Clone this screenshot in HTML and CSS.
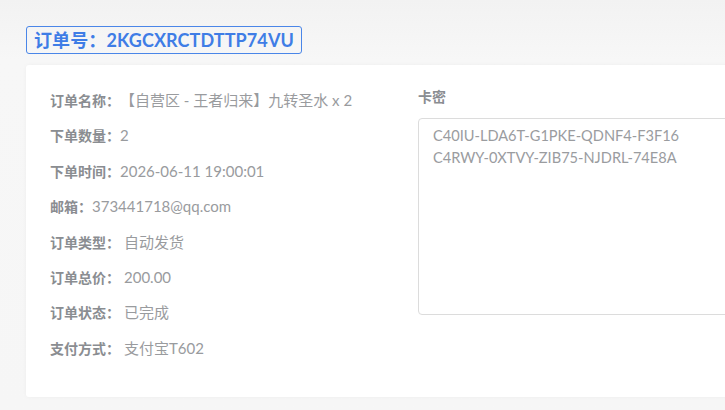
FILE: index.html
```html
<!DOCTYPE html>
<html lang="zh">
<head>
<meta charset="utf-8">
<link rel="stylesheet" href="styles.css">
</head>
<body>
<div class="page">
  <div class="order-title">订单号：2KGCXRCTDTTP74VU</div>
  <div class="card">
    <div class="info">
      <div class="row"><span class="label">订单名称：</span><span class="value">【自营区 - 王者归来】九转圣水 x 2</span></div>
      <div class="row"><span class="label">下单数量：</span><span class="value">2</span></div>
      <div class="row"><span class="label">下单时间：</span><span class="value">2026-06-11 19:00:01</span></div>
      <div class="row"><span class="label">邮箱：</span><span class="value">373441718@qq.com</span></div>
      <div class="row"><span class="label">订单类型：</span><span class="value sp">自动发货</span></div>
      <div class="row"><span class="label">订单总价：</span><span class="value sp">200.00</span></div>
      <div class="row"><span class="label">订单状态：</span><span class="value sp">已完成</span></div>
      <div class="row"><span class="label">支付方式：</span><span class="value sp">支付宝T602</span></div>
    </div>
    <div class="keys">
      <div class="keys-label">卡密</div>
      <div class="keys-box">C40IU-LDA6T-G1PKE-QDNF4-F3F16<br>C4RWY-0XTVY-ZIB75-NJDRL-74E8A</div>
    </div>
  </div>
</div>
</body>
</html>
```

FILE: styles.css
```css
html, body {
  margin: 0;
  padding: 0;
  overflow: hidden;
}
body {
  background: linear-gradient(#f2f2f2 0, #f7f7f7 60px, #f6f6f6 100%);
  font-family: Lato, "Noto Sans CJK SC", sans-serif;
  width: 725px;
  height: 410px;
}
.page {
  padding: 26px 0 0 26px;
}
.order-title {
  display: inline-block;
  box-sizing: border-box;
  height: 28px;
  line-height: 26px;
  padding: 0 7px 0 7px;
  border: 1px solid #4a86e8;
  border-radius: 3px;
  color: #3f7de6;
  font-weight: 700;
  font-size: 18px;
  letter-spacing: 0.1px;
}
.card {
  margin-top: 11px;
  width: 780px;
  height: 332px;
  box-sizing: border-box;
  background: #fff;
  border-radius: 3px;
  box-shadow: 0 0 4px rgba(0,0,0,0.04);
  padding: 25px 0 0 24px;
  display: grid;
  grid-template-columns: 368px 1fr;
}
.info {
  display: flex;
  flex-direction: column;
  gap: 15.4px;
}
.row {
  display: flex;
  align-items: baseline;
  height: 20px;
  font-size: 14px;
  line-height: 20px;
  white-space: nowrap;
}
.label {
  color: #8a8d91;
  font-weight: 700;
}
.value {
  color: #999b9e;
  font-size: 15px;
  line-height: 20px;
}
.value.sp {
  margin-left: 4px;
}
.keys-label {
  margin-top: -3px;
  font-size: 14px;
  line-height: 20px;
  font-weight: 700;
  color: #8a8d91;
}
.keys-box {
  margin-top: 11px;
  width: 400px;
  height: 197px;
  box-sizing: border-box;
  border: 1px solid #dcdcdc;
  border-radius: 4px;
  padding: 6px 14px;
  font-size: 14.6px;
  line-height: 22px;
  color: #9a9c9f;
}
```
